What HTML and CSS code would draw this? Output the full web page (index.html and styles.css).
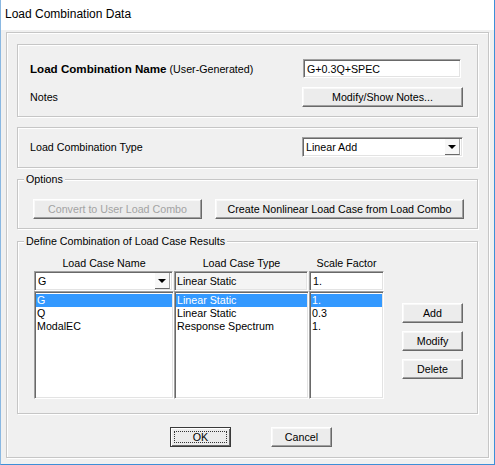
FILE: index.html
```html
<!DOCTYPE html>
<html>
<head>
<meta charset="utf-8">
<link rel="stylesheet" href="styles.css">
</head>
<body>
<div class="window">
  <div class="titlebar">Load Combination Data</div>
  <div class="client">
    <div class="frame">
      <div class="group name-group">
        <div class="row">
          <div class="label"><span class="bold">Load Combination Name</span> (User-Generated)</div>
          <div class="field name-input">G+0.3Q+SPEC</div>
        </div>
        <div class="row notes-row">
          <div class="label">Notes</div>
          <div class="btn notes-btn">Modify/Show Notes...</div>
        </div>
      </div>

      <div class="group type-group">
        <div class="row">
          <div class="label">Load Combination Type</div>
          <div class="field select type-select">
            <span class="select-text">Linear Add</span>
            <span class="drop"><span class="tri"></span></span>
          </div>
        </div>
      </div>

      <div class="group options-group">
        <span class="legend">Options</span>
        <div class="btn-row">
          <div class="btn disabled convert-btn">Convert to User Load Combo</div>
          <div class="btn create-btn">Create Nonlinear Load Case from Load Combo</div>
        </div>
      </div>

      <div class="group define-group">
        <span class="legend">Define Combination of Load Case Results</span>
        <div class="define-body">
          <div class="table">
            <div class="head">Load Case Name</div>
            <div class="head">Load Case Type</div>
            <div class="head">Scale Factor</div>

            <div class="field select case-select">
              <span class="select-text">G</span>
              <span class="drop"><span class="tri"></span></span>
            </div>
            <div class="field readonly">Linear Static</div>
            <div class="field">1.</div>

            <div class="field list">
              <div class="item sel">G</div>
              <div class="item">Q</div>
              <div class="item">ModalEC</div>
            </div>
            <div class="field list">
              <div class="item sel">Linear Static</div>
              <div class="item">Linear Static</div>
              <div class="item">Response Spectrum</div>
            </div>
            <div class="field list">
              <div class="item sel">1.</div>
              <div class="item">0.3</div>
              <div class="item">1.</div>
            </div>
          </div>
          <div class="side-btns">
            <div class="btn side-btn">Add</div>
            <div class="btn side-btn">Modify</div>
            <div class="btn side-btn">Delete</div>
          </div>
        </div>
      </div>

      <div class="footer">
        <div class="btn default-btn"><span class="focus">OK</span></div>
        <div class="btn cancel-btn">Cancel</div>
      </div>
    </div>
  </div>
</div>
</body>
</html>
```

FILE: styles.css
```css
html, body {
  margin: 0;
  padding: 0;
  background: #ffffff;
}

.window {
  width: 495px;
  height: 465px;
  box-sizing: border-box;
  border-left: 1px solid #8ab8e2;
  border-right: 1px solid #3d8fd8;
  border-bottom: 1px solid #3d8fd8;
  background: #f0f0f0;
  display: flex;
  flex-direction: column;
  font-family: "Liberation Sans", Arial, sans-serif;
  font-size: 10.7px;
  color: #000;
}

.titlebar {
  height: 30px;
  flex: none;
  background: #ffffff;
  font-size: 12px;
  line-height: 28px;
  padding-left: 4px;
}

.client {
  padding: 2px 5px 0 5px;
}

.frame {
  height: 413px;
  border: 1px solid #c6c6c6;
  box-shadow: inset 1px 1px 0 #ffffff, 1px 1px 0 #ffffff;
  padding: 11px 10px 0 10px;
  display: flex;
  flex-direction: column;
}

.group {
  border: 1px solid #c6c6c6;
  box-shadow: inset 1px 1px 0 #ffffff, 1px 1px 0 #ffffff;
  display: flex;
  flex-direction: column;
}

.legend {
  align-self: flex-start;
  margin-top: -8px;
  padding: 0 2px;
  height: 15px;
  line-height: 15px;
  background: #f0f0f0;
}

.row {
  display: flex;
  align-items: center;
  justify-content: space-between;
}

.label {
  white-space: nowrap;
}

.bold {
  font-weight: bold;
  font-size: 11.6px;
}

/* sunken field */
.field {
  box-sizing: border-box;
  background: #ffffff;
  border-top: 1px solid #a0a0a0;
  border-left: 1px solid #a0a0a0;
  border-right: 1px solid #ffffff;
  border-bottom: 1px solid #ffffff;
  box-shadow: inset 1px 1px 0 #696969, inset -1px -1px 0 #e3e3e3;
  height: 20px;
  line-height: 18px;
  padding-left: 3px;
  white-space: nowrap;
  overflow: hidden;
}

.readonly {
  background: #f4f4f4;
  padding-left: 2px;
}

.select {
  display: flex;
  align-items: center;
  padding-right: 2px;
}

.select-text {
  flex: 1;
}

.drop {
  width: 15px;
  height: 16px;
  box-sizing: border-box;
  background: #f7f7f7;
  border-right: 1px solid #a0a0a0;
  border-bottom: 1px solid #696969;
  display: flex;
  align-items: center;
  justify-content: center;
}

.tri {
  width: 0;
  height: 0;
  border-left: 4px solid transparent;
  border-right: 4px solid transparent;
  border-top: 4px solid #000;
  margin-top: 1px;
}

/* raised button */
.btn {
  box-sizing: border-box;
  height: 20px;
  background: #ececec;
  border-top: 1px solid #ffffff;
  border-left: 1px solid #ffffff;
  border-right: 1px solid #696969;
  border-bottom: 1px solid #696969;
  box-shadow: inset -1px -1px 0 #a0a0a0, inset 1px 1px 0 #f8f8f8;
  display: flex;
  align-items: center;
  justify-content: center;
  white-space: nowrap;
}

.disabled {
  color: #a3a3a3;
}

/* Name group */
.name-group {
  padding: 14px 15px 9px 12px;
}

.name-input {
  width: 158px;
  height: 19px;
  margin-right: 1px;
}

.notes-row {
  margin-top: 9px;
}

.notes-btn {
  width: 161px;
  margin-right: -1px;
}

/* Type group */
.type-group {
  margin-top: 10px;
  padding: 9px 14px 10px 12px;
}

.type-select {
  width: 161px;
}

/* Options */
.options-group {
  margin-top: 11px;
  padding: 0 13px 9px 15px;
}

.options-group .legend {
  margin-left: -9px;
}

.btn-row {
  display: flex;
  justify-content: space-between;
  margin-top: 12px;
}

.convert-btn {
  width: 169px;
  height: 20px;
}

.create-btn {
  width: 249px;
  height: 20px;
}

/* Define group */
.define-group {
  margin-top: 12px;
  padding: 0 14px 14px 16px;
}

.define-group .legend {
  margin-left: -10px;
}

.define-body {
  display: flex;
  justify-content: space-between;
  margin-top: 7px;
}

.table {
  display: grid;
  grid-template-columns: 140px 135px 75px;
  grid-template-rows: 15px 20px 108px;
  row-gap: 0;
}

.head {
  text-align: center;
  line-height: 14px;
}

.case-select {
  margin-right: 1px;
}

.readonly {
  margin-right: 1px;
}

.list {
  height: 108px;
  padding: 2px 1px 0 1px;
  line-height: 13px;
}

.item {
  height: 13px;
  padding-left: 1px;
}

.item.sel {
  background: #3399ff;
  color: #ffffff;
}

.side-btns {
  display: flex;
  flex-direction: column;
  gap: 8px;
  padding-top: 47px;
}

.side-btn {
  width: 61px;
}

/* Footer */
.footer {
  display: flex;
  margin-top: 13px;
  padding-left: 153px;
  gap: 40px;
}

.default-btn {
  width: 61px;
  border: 1px solid #3a3a3a;
  box-shadow: inset 1px 1px 0 #ffffff, inset -1px -1px 0 #696969;
  padding: 3px;
}

.focus {
  flex: 1;
  align-self: stretch;
  border: 1px dotted #333;
  display: flex;
  align-items: center;
  justify-content: center;
}

.cancel-btn {
  width: 61px;
}
```
